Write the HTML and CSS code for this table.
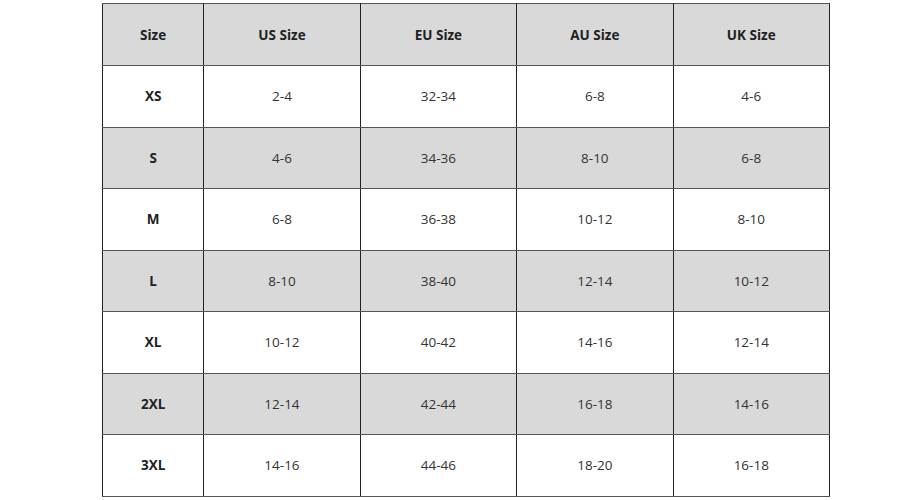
FILE: index.html
```html
<!DOCTYPE html>
<html>
<head>
<meta charset="utf-8">
<link rel="stylesheet" href="styles.css">
</head>
<body>
<table class="chart">
  <colgroup>
    <col class="c-first"><col class="c"><col class="c"><col class="c"><col class="c">
  </colgroup>
  <tr class="shade head"><th>Size</th><th>US Size</th><th>EU Size</th><th>AU Size</th><th>UK Size</th></tr>
  <tr><th>XS</th><td>2-4</td><td>32-34</td><td>6-8</td><td>4-6</td></tr>
  <tr class="shade"><th>S</th><td>4-6</td><td>34-36</td><td>8-10</td><td>6-8</td></tr>
  <tr><th>M</th><td>6-8</td><td>36-38</td><td>10-12</td><td>8-10</td></tr>
  <tr class="shade"><th>L</th><td>8-10</td><td>38-40</td><td>12-14</td><td>10-12</td></tr>
  <tr><th>XL</th><td>10-12</td><td>40-42</td><td>14-16</td><td>12-14</td></tr>
  <tr class="shade"><th>2XL</th><td>12-14</td><td>42-44</td><td>16-18</td><td>14-16</td></tr>
  <tr><th>3XL</th><td>14-16</td><td>44-46</td><td>18-20</td><td>16-18</td></tr>
</table>
</body>
</html>
```
FILE: styles.css
```css
html, body {
  margin: 0;
  padding: 0;
  background: #ffffff;
}
body {
  padding: 3px 0 0 102px;
  font-family: "Open Sans", "Noto Sans", "Liberation Sans", sans-serif;
  color: #222222;
}
.chart {
  border-collapse: collapse;
  table-layout: fixed;
  width: 728px;
  border: 1px solid #222222;
}
.c-first { width: 101px; }
.c { width: 156px; }
.chart th, .chart td {
  height: 60.5px;
  padding: 0;
  text-align: center;
  vertical-align: middle;
  font-size: 13.5px;
  border-left: 1px solid #222222;
  border-right: 1px solid #222222;
  border-top: 1px solid #555555;
  border-bottom: 1px solid #555555;
}
.chart th { font-weight: 700; }
.chart td { font-weight: 400; color: #333333; }
.chart tr.shade th, .chart tr.shade td { background: #d9d9d9; }
.chart tr.head th { height: 61px; }
```
